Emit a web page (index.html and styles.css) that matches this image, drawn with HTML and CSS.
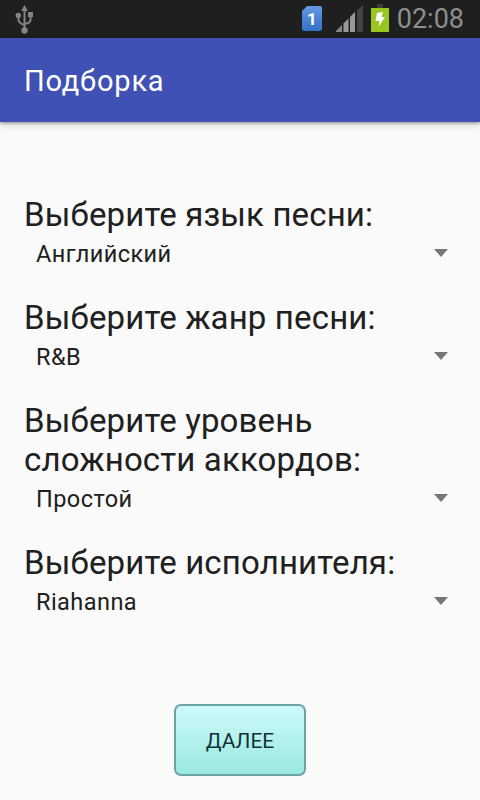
FILE: index.html
```html
<!DOCTYPE html>
<html lang="ru">
<head>
  <meta charset="UTF-8" />
  <meta name="viewport" content="width=device-width, initial-scale=1.0"/>
  <title>Подборка</title>
  <link rel="stylesheet" href="styles.css">
</head>
<body>

  <div class="statusbar">
    <svg class="usb" width="20" height="30" viewBox="0 0 20 30" fill="none" stroke="#858585" stroke-width="2">
      <path d="M9.5 5V26M3.5 11V15Q3.5 18 9.5 20M15.5 10V15Q15.5 18 9.5 19"/>
      <path d="M9.5 0L12.9 6H6.1Z" fill="#858585" stroke="none"/>
      <circle cx="3.3" cy="10.5" r="2.7" fill="#858585" stroke="none"/>
      <path d="M13 7h5v5h-5z" fill="#858585" stroke="none"/>
      <circle cx="9.5" cy="25.5" r="3.2" fill="#858585" stroke="none"/>
    </svg>
    <svg class="sim" width="20" height="25" viewBox="0 0 20 25">
      <defs>
        <linearGradient id="simFill" x1="0" y1="0" x2="0" y2="1">
          <stop offset="0" stop-color="#6599e0"/>
          <stop offset="1" stop-color="#3470c8"/>
        </linearGradient>
      </defs>
      <path d="M5 0H18Q20 0 20 2V23Q20 25 18 25H2Q0 25 0 23V5Z" fill="url(#simFill)"/>
      <text class="sim-number" x="10" y="18.5" text-anchor="middle">1</text>
    </svg>
    <svg class="signal" width="29" height="28" viewBox="0 0 29 28">
      <path d="M0 27V26L6 20V27Z" fill="#858585"/>
      <path d="M7.5 27V18.5L12.5 13.5V27Z" fill="#999"/>
      <path d="M14 27V12L19 7V27Z" fill="#999"/>
      <path d="M21 27V5.5L27 0V27Z" fill="#444"/>
    </svg>
    <svg class="battery" width="18" height="28" viewBox="0 0 18 28">
      <path d="M6 0h6v4H6z" fill="#3c402f"/>
      <path d="M0 4h18v24H0z" fill="#98c61f"/>
      <path d="M6 9L12 8L10.5 13L14 13L7.5 23L8.5 17H4.5Z" fill="#fff"/>
    </svg>
    <div class="clock">02:08</div>
  </div>

  <div class="toolbar">Подборка</div>

  <div class="content">
    <div class="field">
      <div class="label">Выберите язык песни:</div>
      <div class="spinner"><span>Английский</span><i class="arrow"></i></div>
    </div>
    <div class="field">
      <div class="label">Выберите жанр песни:</div>
      <div class="spinner"><span>R&amp;B</span><i class="arrow"></i></div>
    </div>
    <div class="field">
      <div class="label">Выберите уровень сложности аккордов:</div>
      <div class="spinner"><span>Простой</span><i class="arrow"></i></div>
    </div>
    <div class="field">
      <div class="label">Выберите исполнителя:</div>
      <div class="spinner"><span>Riahanna</span><i class="arrow"></i></div>
    </div>
    <button class="next">ДАЛЕЕ</button>
  </div>

</body>
</html>
```
FILE: styles.css
```css
* {
  box-sizing: border-box;
}

body {
  margin: 0;
  height: 800px;
  overflow: hidden;
  background-color: #fafafa;
  font-family: Roboto, "Noto Sans", sans-serif;
  color: #202020;
}

.statusbar {
  height: 38px;
  padding-right: 16px;
  display: flex;
  align-items: flex-start;
  background-color: #1f1f1f;
}

.usb {
  margin: 5px auto 0 15px;
}

.sim {
  margin: 6px 14px 0 0;
}

.sim-number {
  fill: #fff;
  font-size: 17px;
  font-weight: bold;
}

.signal {
  margin: 5px 6px 0 0;
}

.battery {
  margin: 4px 8px 0 0;
}

.clock {
  color: #8e8e8e;
  font-size: 27px;
  line-height: 38px;
}

.toolbar {
  position: relative;
  height: 84px;
  padding-left: 24px;
  background-color: #3f51b5;
  box-shadow: 0 1px 3px rgba(0,0,0,0.35), 0 3px 8px rgba(0,0,0,0.15);
  color: #fff;
  font-size: 29px;
  letter-spacing: 0.8px;
  line-height: 87px;
}

.content {
  padding: 73px 24px 0;
  display: flex;
  flex-direction: column;
}

.field {
  margin-bottom: 24px;
}

.label {
  font-size: 33px;
  letter-spacing: 0.15px;
  line-height: 39px;
}

.spinner {
  height: 40px;
  padding: 0 8px 0 12px;
  display: flex;
  align-items: center;
  justify-content: space-between;
  font-size: 23.5px;
  letter-spacing: 0.45px;
}

.arrow {
  margin-bottom: 3px;
  border: 7px solid transparent;
  border-top: 8px solid #777;
  border-bottom: none;
}

.next {
  width: 132px;
  height: 72px;
  margin-top: 58px;
  padding-top: 3px;
  align-self: center;
  border: 2px solid #6ba5a2;
  border-radius: 7px;
  background: linear-gradient(#cdfafa, #9be9de);
  color: #10333b;
  font-family: inherit;
  font-size: 21px;
}
```
